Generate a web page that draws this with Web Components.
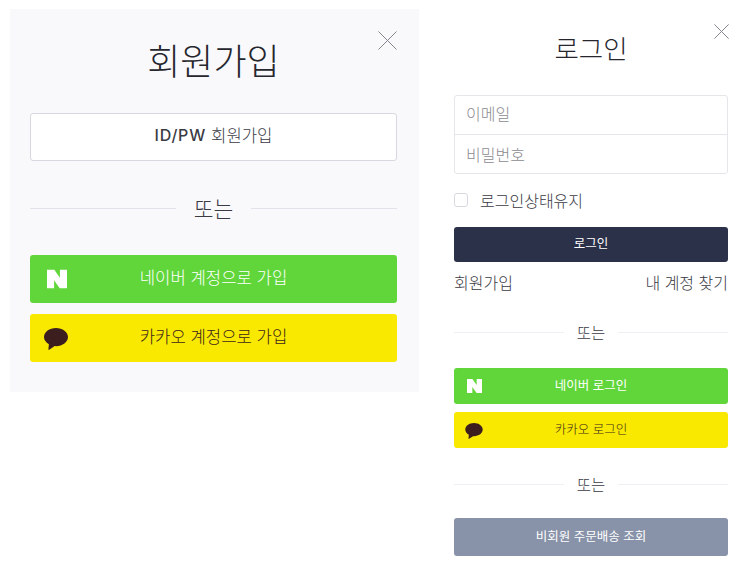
<!DOCTYPE html>
<html lang="ko">
<head>
<meta charset="utf-8">
<title>회원가입 / 로그인</title>
<style>
html, body { margin: 0; padding: 0; background: #fff; }
body {
	display: flex;
	align-items: flex-start;
	font-family: "Noto Sans CJK KR", "Noto Sans", sans-serif;
	color: #2b2b33;
}
</style>
</head>
<body>
<signup-panel></signup-panel>
<login-panel></login-panel>

<script>
const ICONS = {
	naver: `<svg viewBox="0 0 20 20" preserveAspectRatio="none" width="100%" height="100%"><path fill="#fff" d="M0 0H7.2L12.9 8.6V0H20V20H12.8L7.1 11.4V20H0Z"/></svg>`,
	kakao: `<svg viewBox="0 0 24 22" width="100%" height="100%"><path fill="#3c1e1e" d="M12 0C5.4 0 0 3.9 0 9c0 3 1.9 5.5 4.9 7.2L4.4 21.3c-.1.5.4.8.8.5l5.5-3.7c.4 0 .9.1 1.3.1 6.6 0 12-4 12-9.1S18.6 0 12 0z"/></svg>`,
	close: `<svg viewBox="0 0 20 20" style="display:block" width="100%" height="100%"><path fill="none" stroke="#85858d" stroke-width="1" vector-effect="non-scaling-stroke" d="M.5.5l19 19M19.5.5l-19 19"/></svg>`
};

class SocialButton extends HTMLElement {
	constructor() {
		super();
		let kind = this.getAttribute("kind");
		let icon = ICONS[kind] ? `<span class="icon">${ICONS[kind]}</span>` : "";
		this.attachShadow({mode:"open"}).innerHTML = `
<style>
:host {
	display: flex;
	position: relative;
	align-items: center;
	justify-content: center;
	box-sizing: border-box;
	height: var(--h, 48px);
	padding-bottom: 4px;
	border-radius: 3px;
	font-size: var(--fs, 16.7px);
	font-weight: var(--fw, 300);
	white-space: nowrap;
}
:host([kind=naver]) { background: #61d63a; color: #fff; }
:host([kind=kakao]) { background: #f9e900; color: #3c1e1e; font-weight: 300; }
:host([kind=dark]) { background: #2a3149; color: #fff; }
:host([kind=gray]) { background: #8892a8; color: #fff; }
:host([kind=plain]) { background: #fff; color: #3a3a44; border: 1px solid #d8d8e0; }
.icon {
	position: absolute;
	left: var(--icon-x, 17px);
	top: 50%;
	width: var(--icon-w, 20px);
	height: var(--icon-h, 19px);
	transform: translateY(-50%);
}
svg { display: block; }
:host([kind=kakao]) .icon {
	left: var(--kakao-x, 14px);
	width: var(--kakao-w, 24px);
	height: var(--kakao-h, 22px);
	margin-top: 1px;
}
</style>
${icon}<slot></slot>`;
	}
}

class OrDivider extends HTMLElement {
	constructor() {
		super();
		this.attachShadow({mode:"open"}).innerHTML = `
<style>
:host {
	display: flex;
	align-items: center;
	gap: var(--gap, 18px);
	font-size: var(--fs, 21.5px);
	font-weight: 300;
	line-height: 1.3;
	color: #3a3a44;
}
i { flex: 1; height: 1px; background: var(--line, #e2e2ea); }
</style>
<i></i><slot></slot><i></i>`;
	}
}

class CloseButton extends HTMLElement {
	constructor() {
		super();
		this.attachShadow({mode:"open"}).innerHTML = `
<style>
:host { display: block; position: absolute; width: var(--size, 19px); height: var(--size, 19px); }
</style>
${ICONS.close}`;
	}
}

class SignupPanel extends HTMLElement {
	constructor() {
		super();
		this.attachShadow({mode:"open"}).innerHTML = `
<style>
:host {
	display: block;
	position: relative;
	box-sizing: border-box;
	flex: none;
	width: 409px;
	height: 383px;
	margin: 9px 0 0 10px;
	padding: 0 22px 0 20px;
	background: #f9f9fc;
}
close-button { top: 22px; right: 22px; }
h1 {
	margin: 0;
	padding-top: 25px;
	height: 79px;
	box-sizing: border-box;
	text-align: center;
	font-size: 36px;
	line-height: 50px;
	font-weight: 300;
	color: #26262e;
}
.id { margin-top: 25px; }
.id b { font: 500 16px "Inter", "Open Sans", sans-serif; letter-spacing: .8px; margin-right: 5px; }
or-divider { margin-top: 33px; height: 28px; }
.naver { margin-top: 33px; }
.kakao { margin-top: 11px; }
</style>
<close-button></close-button>
<h1>회원가입</h1>
<social-button class="id" kind="plain"><b>ID/PW</b>회원가입</social-button>
<or-divider>또는</or-divider>
<social-button class="naver" kind="naver">네이버 계정으로 가입</social-button>
<social-button class="kakao" kind="kakao">카카오 계정으로 가입</social-button>`;
	}
}

class LoginPanel extends HTMLElement {
	constructor() {
		super();
		this.attachShadow({mode:"open"}).innerHTML = `
<style>
:host {
	display: block;
	position: relative;
	box-sizing: border-box;
	flex: none;
	width: 274px;
	margin-left: 35px;
	--h: 36px;
	--fs: 12.5px;
	--fw: 400;
	--gap: 13px;
	--line: #f0f0f4;
	--icon-x: 13px;
	--icon-w: 15px;
	--icon-h: 14px;
	--kakao-x: 11px;
	--kakao-w: 18px;
	--kakao-h: 16px;
}
close-button { --size: 15px; top: 24px; right: -1px; }
h1 {
	margin: 0;
	padding-top: 27px;
	height: 95px;
	box-sizing: border-box;
	text-align: center;
	font-size: 26.5px;
	line-height: 42px;
	font-weight: 300;
	color: #26262e;
}
.fields { border: 1px solid #e6e6ea; border-radius: 3px; }
.field {
	height: 38px;
	padding-left: 11px;
	font-size: 16px;
	font-weight: 300;
	line-height: 35px;
	color: #8a8a90;
}
.field + .field { border-top: 1px solid #e6e6ea; line-height: 39px; }
.keep {
	display: flex;
	align-items: center;
	gap: 12px;
	margin-top: 14px;
	height: 24px;
	font-size: 16px;
	font-weight: 300;
	color: #3a3a44;
}
.box {
	width: 12px;
	height: 12px;
	border: 1px solid #d8d8e2;
	border-radius: 3px;
}
.login { margin-top: 15px; height: 35px; }
.links {
	display: flex;
	justify-content: space-between;
	margin-top: 8px;
	font-size: 16px;
	font-weight: 300;
	line-height: 24px;
	color: #3a3a44;
}
or-divider { --fs: 15.5px; height: 24px; }
.or1 { margin-top: 26px; }
.naver { margin-top: 24px; }
.kakao { margin-top: 8px; }
.or2 { margin-top: 24px; }
.gray { margin-top: 22px; height: 38px; }
</style>
<close-button></close-button>
<h1>로그인</h1>
<div class="fields">
	<div class="field">이메일</div>
	<div class="field">비밀번호</div>
</div>
<div class="keep"><span class="box"></span>로그인상태유지</div>
<social-button class="login" kind="dark">로그인</social-button>
<div class="links"><span>회원가입</span><span>내 계정 찾기</span></div>
<or-divider class="or1">또는</or-divider>
<social-button class="naver" kind="naver">네이버 로그인</social-button>
<social-button class="kakao" kind="kakao">카카오 로그인</social-button>
<or-divider class="or2">또는</or-divider>
<social-button class="gray" kind="gray">비회원 주문배송 조회</social-button>`;
	}
}

customElements.define("social-button", SocialButton);
customElements.define("or-divider", OrDivider);
customElements.define("close-button", CloseButton);
customElements.define("signup-panel", SignupPanel);
customElements.define("login-panel", LoginPanel);
</script>
</body>
</html>
